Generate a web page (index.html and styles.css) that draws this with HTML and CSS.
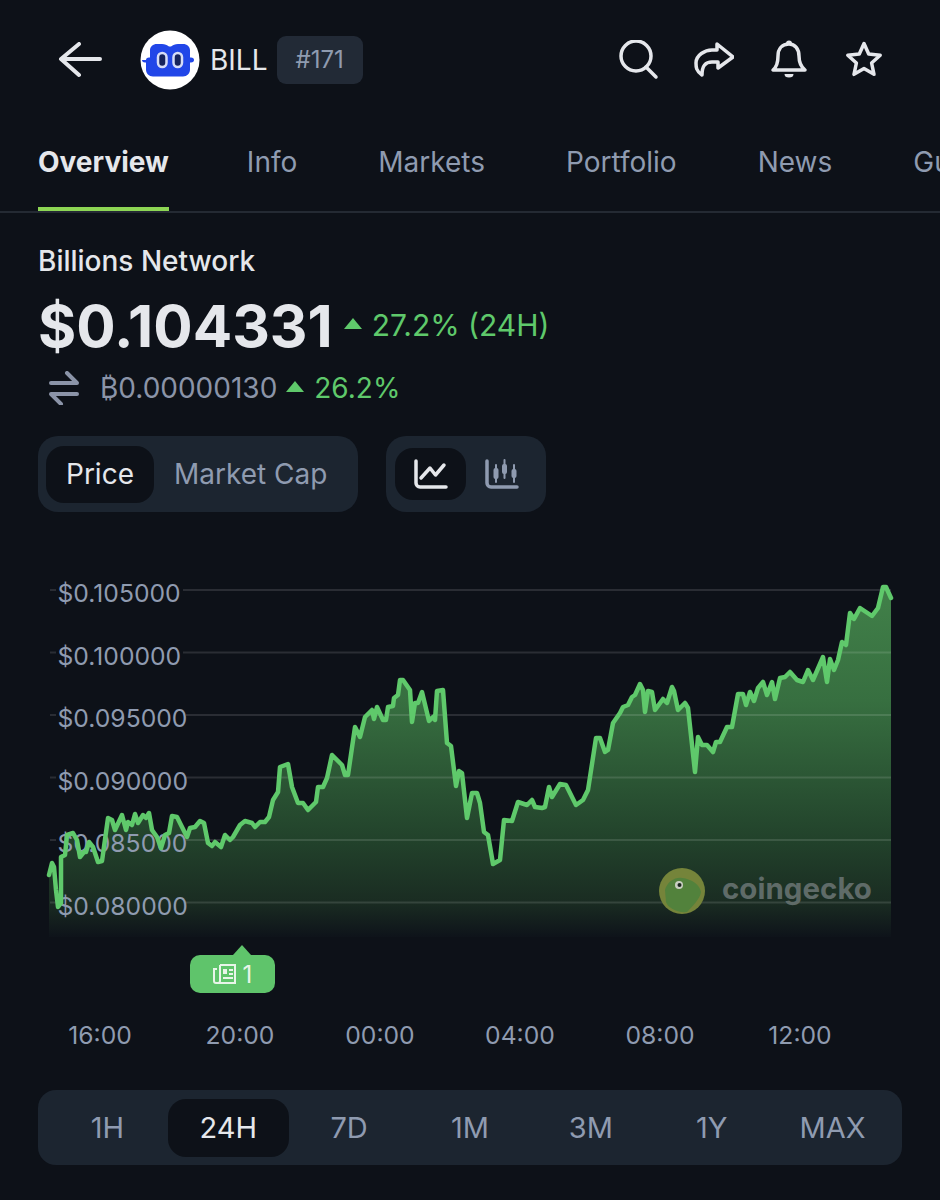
FILE: index.html
```html
<!DOCTYPE html>
<html lang="en">
<head>
  <meta charset="UTF-8" />
  <title>BILL price</title>
  <link rel="stylesheet" href="styles.css">
</head>
<body>
  <!-- Top bar -->
  <header class="topbar">
    <svg class="back-icon" width="44" height="36" viewBox="0 0 44 36">
      <path d="M42 17H4M21 2L3 17L21 33" />
    </svg>
    <svg class="coin-logo" width="60" height="60" viewBox="0 0 60 60">
      <circle cx="30" cy="30" r="29.5" fill="#fff" />
      <path d="M6 30c0-1.500 1-2.500 3-2.500h1v-7c0-4 3-6.500 7-6.500h5c3 0 5 1 7 2.500h2c2-1.500 4-2.500 7-2.500h5c4 0 7 2.500 7 6.500v7h1c2 0 3 1 3 2.500s-1 2.500-3 2.500h-1v7c0 4-3 7-7 7h-30c-4 0-7-3-7-7v-7h-1c-2 0-3-1-3-2.500z" fill="#2146e8" />
      <rect x="18" y="23" width="8.500" height="14" rx="4.200" fill="#17245c" stroke="#d6dcf7" stroke-width="2.500" />
      <rect x="33.500" y="23" width="8.500" height="14" rx="4.200" fill="#17245c" stroke="#d6dcf7" stroke-width="2.500" />
    </svg>
    <span class="coin-symbol">BILL</span>
    <span class="rank-badge">#171</span>
    <div class="topbar-actions">
      <svg class="action-icon" width="40" height="40" viewBox="0 0 40 40">
        <circle cx="17" cy="16" r="15" />
        <path d="M27 27L37 37" />
      </svg>
      <svg class="action-icon" width="40" height="40" viewBox="0 0 40 40">
        <path d="M23 4L39 17L24 28V22H18C11 22 8 26 8 35C2 31 2 27 2 23C2 15 11 10 18 10H23Z" />
      </svg>
      <svg class="action-icon" width="40" height="40" viewBox="0 0 40 40">
        <path d="M4 30H36C31 26 30 20 30 16C30 9 26 4 20 4C13 4 9 9 9 16C9 20 9 26 4 30Z" />
        <path class="icon-solid" d="M17 3.500a2.800 2.800 0 0 1 6 0zM15.500 34h9a4.500 3.500 0 0 1-9 0z" />
      </svg>
      <svg class="action-icon" width="40" height="40" viewBox="0 0 40 40">
        <path d="M20 3.500L24.700 14L36.200 15.200L27.600 23L30 34.300L20 28.500L10 34.300L12.400 23L3.800 15.200L15.300 14Z" />
      </svg>
    </div>
  </header>

  <!-- Tabs -->
  <nav class="tabs">
    <a class="tab active">Overview</a>
    <a class="tab">Info</a>
    <a class="tab">Markets</a>
    <a class="tab">Portfolio</a>
    <a class="tab">News</a>
    <a class="tab">Guides</a>
  </nav>

  <!-- Price summary -->
  <section class="summary">
    <h2 class="coin-name">Billions Network</h2>
    <div class="price-row">
      <span class="price">$0.104331</span>
      <span class="up-arrow"></span>
      <span class="change">27.2% (24H)</span>
    </div>
    <div class="btc-row">
      <svg class="swap-icon" width="30" height="34" viewBox="0 0 30 34">
        <path d="M2 12H28L18 2M28 23H2L12 33" />
      </svg>
      <span class="btc-price">₿0.00000130</span>
      <span class="up-arrow small"></span>
      <span class="change small">26.2%</span>
    </div>
    <div class="controls">
      <div class="segment text-segment">
        <span class="seg-item active">Price</span>
        <span class="seg-item">Market Cap</span>
      </div>
      <div class="segment icon-segment">
        <span class="seg-icon active">
          <svg width="36" height="32" viewBox="0 0 36 32">
            <path d="M3 3V25a4 4 0 0 0 4 4H33M8 20L17 10L22.500 17L31 7" />
          </svg>
        </span>
        <span class="seg-icon">
          <svg width="36" height="32" viewBox="0 0 36 32">
            <path d="M3 3V25a4 4 0 0 0 4 4H33" />
            <path class="candle-wick" d="M12 7V24M20.500 2V20M30 7V24" />
            <rect class="candle" x="9.500" y="10" width="5" height="11" rx="2" />
            <rect class="candle" x="18" y="6" width="5" height="10" rx="2" />
            <rect class="candle" x="27.500" y="11" width="5" height="9" rx="2" />
          </svg>
        </span>
      </div>
    </div>
  </section>

  <!-- Chart -->
  <section class="chart">
    <svg class="chart-svg" width="940" height="370" viewBox="0 580 940 370">
      <defs>
        <linearGradient id="areaFill" gradientUnits="userSpaceOnUse" x1="0" y1="590" x2="0" y2="937">
          <stop offset="0" stop-color="#418049" />
          <stop offset="0.32" stop-color="#376f40" />
          <stop offset="0.72" stop-color="#22422b" />
          <stop offset="0.9" stop-color="#1a2c22" />
          <stop offset="1" stop-color="#0e131a" />
        </linearGradient>
      </defs>
      <polygon fill="url(#areaFill)" points="49,875 52,863 54,867 56,890 58,907 61,903 61,857 65,855 67,835 73,833 77,840 80,857 84,852 86,852 89,842 93,847 98,862 102,861 108,818 112,820 115,830 122,815 126,830 128,822 132,825 135,814 138,823 143,815 146,818 149,813 152,830 157,837 161,848 165,835 169,833 172,816 177,817 182,827 187,837 190,828 195,827 200,821 204,823 208,843 212,846 215,842 221,847 225,835 230,840 233,837 240,825 245,821 252,823 255,827 260,822 265,822 269,817 273,800 278,792 280,767 288,764 292,787 298,803 303,803 308,810 316,802 318,787 323,787 327,778 332,755 337,760 342,765 345,775 348,775 355,727 360,737 365,717 372,710 374,719 377,707 383,720 386,720 388,707 393,706 394,698 398,695 400,680 403,680 410,690 412,722 415,703 418,703 422,692 429,721 433,717 435,720 437,691 443,690 447,743 451,746 456,786 459,771 462,773 467,818 472,793 477,793 480,803 484,832 488,835 493,864 500,860 504,820 512,821 518,802 527,805 532,800 535,807 542,808 545,807 549,787 552,797 560,784 566,785 576,805 583,800 588,790 596,738 600,738 605,752 608,750 613,723 620,713 623,707 628,705 632,697 635,695 640,684 643,690 645,712 648,691 652,692 655,710 663,699 667,703 672,687 674,691 678,710 685,703 688,708 695,772 698,737 702,745 707,745 713,752 716,742 720,742 727,727 732,727 738,694 743,694 746,705 750,692 754,701 758,688 763,682 767,695 772,682 775,699 780,678 785,677 790,672 797,680 803,682 808,670 813,680 823,657 827,682 830,659 834,670 838,660 842,642 846,645 850,613 854,619 860,608 872,616 878,608 883,587 886,587 891,598 891,937 49,937" />
      <!-- grid lines stop around the axis labels -->
      <path class="grid-line" d="M50 590H56M183 590H891M50 652.500H56M183 652.500H891M50 715H56M186 715H891M50 777.500H56M186 777.500H891M50 840H56M186 840H891M50 902.500H56M186 902.500H891" />
      <text class="axis-label" x="57.500" y="602">$0.105000</text>
      <text class="axis-label" x="57.500" y="665">$0.100000</text>
      <text class="axis-label" x="57.500" y="727">$0.095000</text>
      <text class="axis-label" x="57.500" y="790">$0.090000</text>
      <text class="axis-label" x="57.500" y="852">$0.085000</text>
      <text class="axis-label" x="57.500" y="915">$0.080000</text>
      <g class="watermark">
        <circle cx="682" cy="891" r="23" fill="#75843a" />
        <path d="M665 890C667 882 675 877 682 878C692 879 700 885 701 892C700 899 692 907 687 912C677 913 668 908 666 902Z" fill="#52823c" />
        <circle cx="679" cy="885" r="4" fill="#c9cfc2" />
        <circle cx="679.500" cy="885" r="2" fill="#1c2620" />
        <text class="watermark-text" x="722" y="899">coingecko</text>
      </g>
      <polyline class="price-line" points="49,875 52,863 54,867 56,890 58,907 61,903 61,857 65,855 67,835 73,833 77,840 80,857 84,852 86,852 89,842 93,847 98,862 102,861 108,818 112,820 115,830 122,815 126,830 128,822 132,825 135,814 138,823 143,815 146,818 149,813 152,830 157,837 161,848 165,835 169,833 172,816 177,817 182,827 187,837 190,828 195,827 200,821 204,823 208,843 212,846 215,842 221,847 225,835 230,840 233,837 240,825 245,821 252,823 255,827 260,822 265,822 269,817 273,800 278,792 280,767 288,764 292,787 298,803 303,803 308,810 316,802 318,787 323,787 327,778 332,755 337,760 342,765 345,775 348,775 355,727 360,737 365,717 372,710 374,719 377,707 383,720 386,720 388,707 393,706 394,698 398,695 400,680 403,680 410,690 412,722 415,703 418,703 422,692 429,721 433,717 435,720 437,691 443,690 447,743 451,746 456,786 459,771 462,773 467,818 472,793 477,793 480,803 484,832 488,835 493,864 500,860 504,820 512,821 518,802 527,805 532,800 535,807 542,808 545,807 549,787 552,797 560,784 566,785 576,805 583,800 588,790 596,738 600,738 605,752 608,750 613,723 620,713 623,707 628,705 632,697 635,695 640,684 643,690 645,712 648,691 652,692 655,710 663,699 667,703 672,687 674,691 678,710 685,703 688,708 695,772 698,737 702,745 707,745 713,752 716,742 720,742 727,727 732,727 738,694 743,694 746,705 750,692 754,701 758,688 763,682 767,695 772,682 775,699 780,678 785,677 790,672 797,680 803,682 808,670 813,680 823,657 827,682 830,659 834,670 838,660 842,642 846,645 850,613 854,619 860,608 872,616 878,608 883,587 886,587 891,598" />
    </svg>
    <div class="news-pin">
      <svg width="24" height="22" viewBox="0 0 24 22">
        <path d="M7 2H22V20H3a2 2 0 0 1-2-2V6H4M7 2V18a2 2 0 0 1-2 2" />
        <path d="M16 7H20M16 11H20M10 15H20" />
        <rect class="pin-photo" x="10" y="6" width="4" height="5" />
      </svg>
      <span>1</span>
    </div>
    <div class="time-axis">
      <span>16:00</span>
      <span>20:00</span>
      <span>00:00</span>
      <span>04:00</span>
      <span>08:00</span>
      <span>12:00</span>
    </div>
  </section>

  <!-- Range picker -->
  <div class="ranges">
    <span class="range">1H</span>
    <span class="range active">24H</span>
    <span class="range">7D</span>
    <span class="range">1M</span>
    <span class="range">3M</span>
    <span class="range">1Y</span>
    <span class="range">MAX</span>
  </div>
</body>
</html>
```

FILE: styles.css
```css
* {
  margin: 0;
  padding: 0;
  box-sizing: border-box;
  font-family: Inter, "Liberation Sans", sans-serif;
}
body {
  width: 940px;
  height: 1200px;
  background: #0d1118;
  overflow: hidden;
}

/* Top bar */
.topbar {
  display: flex;
  align-items: center;
  height: 120px;
  padding-left: 58px;
}
.back-icon {
  fill: none;
  stroke: #e5e7eb;
  stroke-width: 4;
  stroke-linecap: round;
  stroke-linejoin: round;
}
.coin-logo {
  margin-left: 38px;
}
.coin-symbol {
  margin-left: 10px;
  font-size: 28px;
  color: #e5e7eb;
}
.rank-badge {
  margin-left: 9px;
  padding: 0 19px;
  height: 48px;
  line-height: 48px;
  font-size: 24px;
  color: #8f9bb0;
  background: #222a36;
  border-radius: 9px;
}
.topbar-actions {
  display: flex;
  gap: 35px;
  margin-left: auto;
  margin-right: 56px;
}
.action-icon {
  fill: none;
  stroke: #e5e7eb;
  stroke-width: 3.5;
  stroke-linecap: round;
  stroke-linejoin: round;
}
.icon-solid {
  fill: #e5e7eb;
  stroke: none;
}

/* Tabs */
.tabs {
  display: flex;
  gap: 81px;
  padding-left: 38px;
  border-bottom: 2px solid #242a33;
  overflow: hidden;
}
.tab {
  flex: none;
  padding: 26px 0 29px;
  line-height: 32px;
  font-size: 28px;
  color: #8f9bb0;
  border-bottom: 4px solid transparent;
}
.tab.active {
  margin-right: -3px;
  font-weight: 700;
  color: #e5e7eb;
  border-bottom-color: #8dd654;
}

/* Summary */
.summary {
  padding: 31px 38px 0;
}
.coin-name {
  font-size: 28px;
  font-weight: 500;
  line-height: 34px;
  color: #e5e7eb;
}
.price-row {
  display: flex;
  align-items: center;
  margin-top: 12px;
  height: 70px;
}
.price {
  font-size: 58.4px;
  font-weight: 700;
  color: #e5e7eb;
}
.up-arrow {
  width: 0;
  height: 0;
  margin: 0 10px 4px 11px;
  border-left: 9px solid transparent;
  border-right: 9px solid transparent;
  border-bottom: 11px solid #5fc96b;
}
.change {
  font-size: 30px;
  color: #5fc96b;
}
.btc-row {
  display: flex;
  align-items: center;
  margin-top: 11px;
  height: 34px;
  padding-left: 11px;
}
.swap-icon {
  fill: none;
  stroke: #8b94a8;
  stroke-width: 4;
  stroke-linecap: round;
  stroke-linejoin: round;
}
.btc-price {
  margin-left: 21px;
  font-size: 28px;
  color: #8b94a8;
}
.up-arrow.small {
  margin: 0 10px 4px 9px;
}
.change.small {
  font-size: 28px;
}

/* Price / chart type toggles */
.controls {
  display: flex;
  gap: 28px;
  margin-top: 31px;
}
.segment {
  display: flex;
  align-items: center;
  height: 76px;
  background: #1c2530;
  border-radius: 20px;
}
.text-segment {
  width: 320px;
  padding: 0 8px;
}
.seg-item {
  height: 57px;
  line-height: 57px;
  padding: 0 20px;
  font-size: 28px;
  color: #8f9bb0;
}
.seg-item.active {
  color: #e5e7eb;
  background: #0d1118;
  border-radius: 18px;
}
.icon-segment {
  width: 160px;
  padding: 0 9px;
}
.seg-icon {
  display: flex;
  align-items: center;
  justify-content: center;
  width: 71px;
  height: 52px;
}
.seg-icon svg {
  fill: none;
  stroke: #8f9bb0;
  stroke-width: 3.5;
  stroke-linecap: round;
  stroke-linejoin: round;
}
.seg-icon.active {
  background: #0d1118;
  border-radius: 18px;
}
.seg-icon.active svg {
  stroke: #e5e7eb;
}
.candle-wick {
  stroke-width: 2;
}
.candle {
  fill: #8f9bb0;
  stroke: none;
}

/* Chart */
.chart {
  position: relative;
  margin-top: 68px;
}
.chart-svg {
  display: block;
}
.grid-line {
  stroke: rgba(255, 255, 255, 0.12);
  stroke-width: 2;
  fill: none;
}
.axis-label {
  font-size: 24.7px;
  fill: #8f9bb0;
}
.price-line {
  fill: none;
  stroke: #5fc96b;
  stroke-width: 4.5;
  stroke-linecap: round;
  stroke-linejoin: round;
  filter: blur(0.5px);
}
.watermark-text {
  font-size: 29.5px;
  font-weight: 700;
  fill: #5f6b68;
}
.news-pin {
  position: absolute;
  left: 190px;
  top: 375px;
  display: flex;
  align-items: center;
  justify-content: center;
  gap: 6px;
  width: 85px;
  height: 38px;
  font-size: 24px;
  color: #e8f5e9;
  background: #5fc46b;
  border-radius: 10px;
}
.news-pin::before {
  content: "";
  position: absolute;
  left: 43px;
  top: -10px;
  border-left: 9px solid transparent;
  border-right: 9px solid transparent;
  border-bottom: 10px solid #5fc46b;
}
.news-pin svg {
  fill: none;
  stroke: #e8f5e9;
  stroke-width: 2;
}
.news-pin .pin-photo {
  fill: #e8f5e9;
  stroke: none;
}
.time-axis {
  display: grid;
  grid-template-columns: repeat(6, 140px);
  margin-top: 70px;
  padding-left: 30px;
  line-height: 30px;
  text-align: center;
  font-size: 24.7px;
  color: #8f9bb0;
}

/* Range picker */
.ranges {
  display: grid;
  grid-template-columns: repeat(7, 1fr);
  align-items: center;
  width: 864px;
  height: 75px;
  margin: 40px 0 0 38px;
  padding: 0 9px;
  background: #1c2530;
  border-radius: 18px;
}
.range {
  height: 58px;
  line-height: 58px;
  text-align: center;
  font-size: 29px;
  color: #8f9bb0;
}
.range.active {
  color: #e5e7eb;
  background: #0d1118;
  border-radius: 18px;
}
```
